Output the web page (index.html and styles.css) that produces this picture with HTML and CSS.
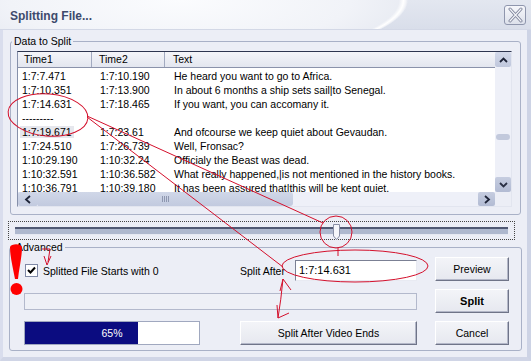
FILE: index.html
```html
<!DOCTYPE html>
<html lang="en">
  <head>
    <meta charset="utf-8">
    <title>Splitting File...</title>
    <link rel="stylesheet" href="styles.css">
  </head>
  <body>
<div class="window">
  <div class="titlebar">
    <span class="title">Splitting File...</span>
    <div class="closeBtn">
      <svg width="19" height="18" viewBox="0 0 19 18">
        <path d="M4 3 L15 15 M15 3 L4 15" stroke="#7b8198" stroke-width="3" stroke-linecap="round"/>
        <path d="M4 3 L15 15 M15 3 L4 15" stroke="#f3f5f9" stroke-width="1.2" stroke-linecap="round"/>
      </svg>
    </div>
  </div>
  <div class="client">
    <fieldset class="group dataGroup">
      <legend>Data to Split</legend>
      <div class="listView">
        <div class="listHeader">
          <div>Time1</div><div>Time2</div><div>Text</div>
        </div>
        <div class="listRows">
          <div class="row"><span>1:7:7.471</span><span>1:7:10.190</span><span>He heard you want to go to Africa.</span></div>
          <div class="row"><span>1:7:10.351</span><span>1:7:13.900</span><span>In about 6 months a ship sets sail|to Senegal.</span></div>
          <div class="row"><span>1:7:14.631</span><span>1:7:18.465</span><span>If you want, you can accomany it.</span></div>
          <div class="row"><span>---------</span><span></span><span></span></div>
          <div class="row"><span><b class="focus">1:7:19.671</b></span><span>1:7:23.61</span><span>And ofcourse we keep quiet about Gevaudan.</span></div>
          <div class="row"><span>1:7:24.510</span><span>1:7:26.739</span><span>Well, Fronsac?</span></div>
          <div class="row"><span>1:10:29.190</span><span>1:10:32.24</span><span>Officialy the Beast was dead.</span></div>
          <div class="row"><span>1:10:32.591</span><span>1:10:36.582</span><span>What really happened,|is not mentioned in the history books.</span></div>
          <div class="row"><span>1:10:36.791</span><span>1:10:39.180</span><span>It has been assured that|this will be kept quiet.</span></div>
        </div>
        <div class="vScroll">
          <div class="sbBtn upBtn">
            <svg width="9" height="6" viewBox="0 0 9 6"><path d="M1 5 L4.5 1.5 L8 5" fill="none" stroke="#1e2438" stroke-width="1.8"/></svg>
          </div>
          <div class="vThumb"></div>
          <div class="sbBtn downBtn">
            <svg width="9" height="6" viewBox="0 0 9 6"><path d="M1 1 L4.5 4.5 L8 1" fill="none" stroke="#2a3044" stroke-width="1.8"/></svg>
          </div>
        </div>
        <div class="hScroll">
          <div class="sbBtn leftBtn">
            <svg width="8" height="9" viewBox="0 0 8 9"><path d="M6 1 L2 4.5 L6 8" fill="none" stroke="#1e2438" stroke-width="1.8"/></svg>
          </div>
          <div class="hThumb"><span class="grip"></span></div>
          <div class="hTrack"></div>
          <div class="sbBtn rightBtn">
            <svg width="8" height="9" viewBox="0 0 8 9"><path d="M2 1 L6 4.5 L2 8" fill="none" stroke="#1e2438" stroke-width="1.8"/></svg>
          </div>
        </div>
        <div class="corner"></div>
      </div>
    </fieldset>

    <div class="sliderBox">
      <div class="sliderTrack">
        <svg class="sliderThumb" width="7" height="16" viewBox="0 0 7 16">
          <path d="M0.5 0.5 H6.5 V12 L3.5 15.5 L0.5 12 Z" fill="#f6f7fb" stroke="#8a90a6"/>
        </svg>
      </div>
    </div>

    <fieldset class="group advGroup">
      <legend>Advanced</legend>
      <div class="advGrid">
        <div class="checkRow">
          <span class="checkBox">
            <svg width="9" height="9" viewBox="0 0 9 9"><path d="M1 4 L3.5 6.5 L8 1.5" fill="none" stroke="#000" stroke-width="2"/></svg>
          </span>
          <span>Splitted File Starts with 0</span>
        </div>
        <div class="splitAfter">
          <span>Split After</span>
          <div class="textBox">1:7:14.631</div>
        </div>
        <button class="btn">Preview</button>

        <div class="emptyBar"></div>
        <button class="btn bold">Split</button>

        <div class="progress">
          <div class="progressFill" style="width: 65%"></div>
          <span class="progressText">65%</span>
        </div>
        <button class="btn wide">Split After Video Ends</button>
        <button class="btn">Cancel</button>
      </div>
    </fieldset>
  </div>

  <svg class="marks" width="531" height="361" viewBox="0 0 531 361">
    <g fill="none" stroke="#d4102c" stroke-width="1">
      <ellipse cx="48" cy="115" rx="40" ry="21" transform="rotate(5 48 115)"/>
      <line x1="87" y1="117" x2="283" y2="267"/>
      <line x1="87" y1="116" x2="323" y2="223"/>
      <ellipse cx="336" cy="232" rx="16" ry="16"/>
      <line x1="338" y1="248" x2="338" y2="256"/>
      <ellipse cx="355" cy="266" rx="73" ry="16"/>
      <path d="M283 279 Q281 300 278 318"/>
      <path d="M280 291 L283 279 L291 290"/>
      <path d="M277 305 L278 318 L289 313"/>
      <path d="M42 249 L50 249 L48 262"/>
      <path d="M44 256 L47 265 L51 256"/>
    </g>
    <path fill="#ff0000" d="M10 247 C11 244 20 243 22 247 C22 257 19 269 18 279 L15 279 C13 268 10 257 10 247 Z"/>
    <circle cx="16.5" cy="289" r="6" fill="#ff0000"/>
  </svg>
</div>
  </body>
</html>
```

FILE: styles.css
```css
* {
  margin: 0px;
  padding: 0px;
  box-sizing: border-box;
}
body {
  width: 531px;
  height: 361px;
  overflow: hidden;
  font-family: 'Liberation Sans', Arial, sans-serif;
  font-size: 10.5px;
  color: black;
  background-color: #d7dcea;
}
.window {
  position: relative;
  width: 531px;
  height: 361px;
  display: flex;
  flex-direction: column;
}
.titlebar {
  height: 30px;
  display: flex;
  align-items: center;
  justify-content: space-between;
  padding: 0px 5px 0px 10px;
  border-bottom: 1px solid #d3d8e6;
  background:
    radial-gradient(ellipse 228px 62px at 180px 0px, rgba(255,255,255,0) 96%, #ffffff 98%, rgba(255,255,255,0) 100%),
    radial-gradient(ellipse 228px 62px at 180px 0px, #fbfcfe 0%, #f1f3f8 75%, #e9ecf3 99%, rgba(0,0,0,0) 100%),
    linear-gradient(#e3e7f0, #d9deea);
}
.title {
  font-weight: bold;
  font-size: 12px;
  color: #3d4a6c;
  padding-top: 3px;
}
.closeBtn {
  width: 22px;
  height: 20px;
  border: 1px solid #8f96ad;
  border-radius: 3px;
  background: linear-gradient(#f6f7fb, #dde1eb);
  display: flex;
  align-items: center;
  justify-content: center;
}
.client {
  flex: 1;
  background-color: #eceef6;
  border-left: 3px solid #d9dded;
  border-right: 4px solid #cdd3e5;
  border-bottom: 4px solid #d0d5e6;
}
.group {
  border: 1px solid #a9b1c7;
  border-radius: 3px;
  min-width: 0px;
}
.group legend {
  padding: 0px 2px;
  line-height: 12px;
}
.dataGroup {
  margin: 5px 6px 0px 7px;
  padding: 4px 8px 7px 6px;
}
.dataGroup legend {
  margin-left: -5px;
}
.listView {
  height: 156px;
  display: grid;
  grid-template-columns: 1fr 16px;
  grid-template-rows: 16px 1fr 14px;
  border: 1px solid;
  border-color: #2e3650 #e2e5ef #e2e5ef #8690aa;
  background-color: white;
}
.listHeader {
  grid-column: 1;
  grid-row: 1;
  display: grid;
  grid-template-columns: 74px 73px 1fr;
  line-height: 15px;
  background: linear-gradient(#f4f5f9, #e3e6ef);
  border-bottom: 1px solid #8a92aa;
}
.listHeader div:nth-child(1) {
  padding-left: 6px;
  border-right: 1px solid #a2aac0;
}
.listHeader div:nth-child(2) {
  padding-left: 7px;
  border-right: 1px solid #a2aac0;
}
.listHeader div:nth-child(3) {
  padding-left: 8px;
}
.listRows {
  grid-column: 1;
  grid-row: 2;
  overflow: hidden;
  padding-top: 1px;
}
.row {
  display: grid;
  grid-template-columns: 74px 73px 1fr;
  height: 14px;
  line-height: 14px;
  white-space: nowrap;
}
.row span:nth-child(1) {
  padding-left: 4px;
}
.row span:nth-child(2) {
  padding-left: 8px;
}
.row span:nth-child(3) {
  padding-left: 9px;
}
.focus {
  font-weight: normal;
  background-color: #e6e7ed;
  margin-left: -2px;
  padding: 0px 2px;
}
.vScroll {
  grid-column: 2;
  grid-row: 1 / 3;
  background-color: #eef0f8;
  display: flex;
  flex-direction: column;
}
.sbBtn {
  display: flex;
  align-items: center;
  justify-content: center;
  background: linear-gradient(#d3d9ea, #bfc7dc);
  border-radius: 2px;
}
.upBtn {
  height: 15px;
}
.downBtn {
  height: 15px;
  margin-top: auto;
  background: linear-gradient(#c6cde0, #b2bbd3);
}
.vThumb {
  height: 6px;
  margin: 67px 1px 0px 1px;
  border-radius: 3px;
  background-color: #c2c9dc;
}
.hScroll {
  grid-column: 1;
  grid-row: 3;
  display: flex;
  background-color: #eef0f8;
}
.leftBtn {
  width: 20px;
  background: linear-gradient(#d0d7e8, #c2cadf);
}
.hThumb {
  width: 255px;
  display: flex;
  align-items: center;
  justify-content: center;
  background: linear-gradient(#d0d7e8, #c2cadf);
  border-radius: 0px 3px 3px 0px;
}
.grip {
  width: 7px;
  height: 6px;
  background: repeating-linear-gradient(to right, #8e97b0 0px, #8e97b0 1px, transparent 1px, transparent 2px);
}
.hTrack {
  flex: 1;
}
.rightBtn {
  width: 17px;
  background: linear-gradient(#c6cde0, #b2bbd3);
}
.corner {
  grid-column: 2;
  grid-row: 3;
  background-color: #eceef6;
}
.sliderBox {
  height: 19px;
  margin: 6px 12px 0px 5px;
  padding: 5px 6px 0px 6px;
  border: 1px dotted #444;
}
.sliderTrack {
  position: relative;
  height: 8px;
  border-top: 2px solid #4f5873;
  border-bottom: 1px solid #e6e9f2;
  background-color: #aeb8ce;
}
.sliderThumb {
  position: absolute;
  left: 318px;
  top: -5px;
}
.advGroup {
  margin: 1px 5px 0px 6px;
  padding: 4px 0px 5px 14px;
}
.advGroup legend {
  margin-left: -10px;
}
.advGrid {
  display: grid;
  grid-template-columns: 216px 195px 74px;
  grid-template-rows: 24px 24px 24px;
  row-gap: 8px;
  align-items: center;
}
.checkRow {
  display: flex;
  align-items: center;
  padding-top: 3px;
}
.checkBox {
  width: 13px;
  height: 13px;
  margin-left: 1px;
  margin-right: 5px;
  border: 1px solid #7f89a6;
  background-color: white;
  display: flex;
  align-items: center;
  justify-content: center;
}
.splitAfter {
  display: flex;
  align-items: center;
  padding-top: 3px;
}
.textBox {
  width: 122px;
  height: 21px;
  margin-left: auto;
  margin-right: 18px;
  padding-left: 3px;
  line-height: 18px;
  font-size: 11px;
  background-color: white;
  border: 1px solid;
  border-color: #7b8094 #e8eaf2 #e8eaf2 #7b8094;
}
.btn {
  height: 24px;
  width: 74px;
  font-family: 'Liberation Sans', Arial, sans-serif;
  font-size: 10.5px;
  color: black;
  background: linear-gradient(#f3f4f8, #e6e8ef);
  border: 1px solid;
  border-color: #ffffff #6f7488 #6f7488 #ffffff;
  box-shadow: inset -1px -1px 0px #b3b7c8;
}
.btn.bold {
  font-weight: bold;
  font-size: 11px;
}
.btn.wide {
  width: 177px;
}
.emptyBar {
  grid-column: 1 / 3;
  width: 393px;
  height: 17px;
  border: 1px solid #b3b9cc;
  background-color: #eef0f6;
}
.progress {
  position: relative;
  width: 176px;
  height: 24px;
  border: 1px solid #a0a8bf;
  background-color: white;
  display: flex;
}
.progressFill {
  background-color: #0b0c80;
}
.progressText {
  position: absolute;
  left: 0px;
  right: 0px;
  top: 0px;
  line-height: 22px;
  text-align: center;
  color: white;
}
.marks {
  position: absolute;
  left: 0px;
  top: 0px;
  pointer-events: none;
}
```
